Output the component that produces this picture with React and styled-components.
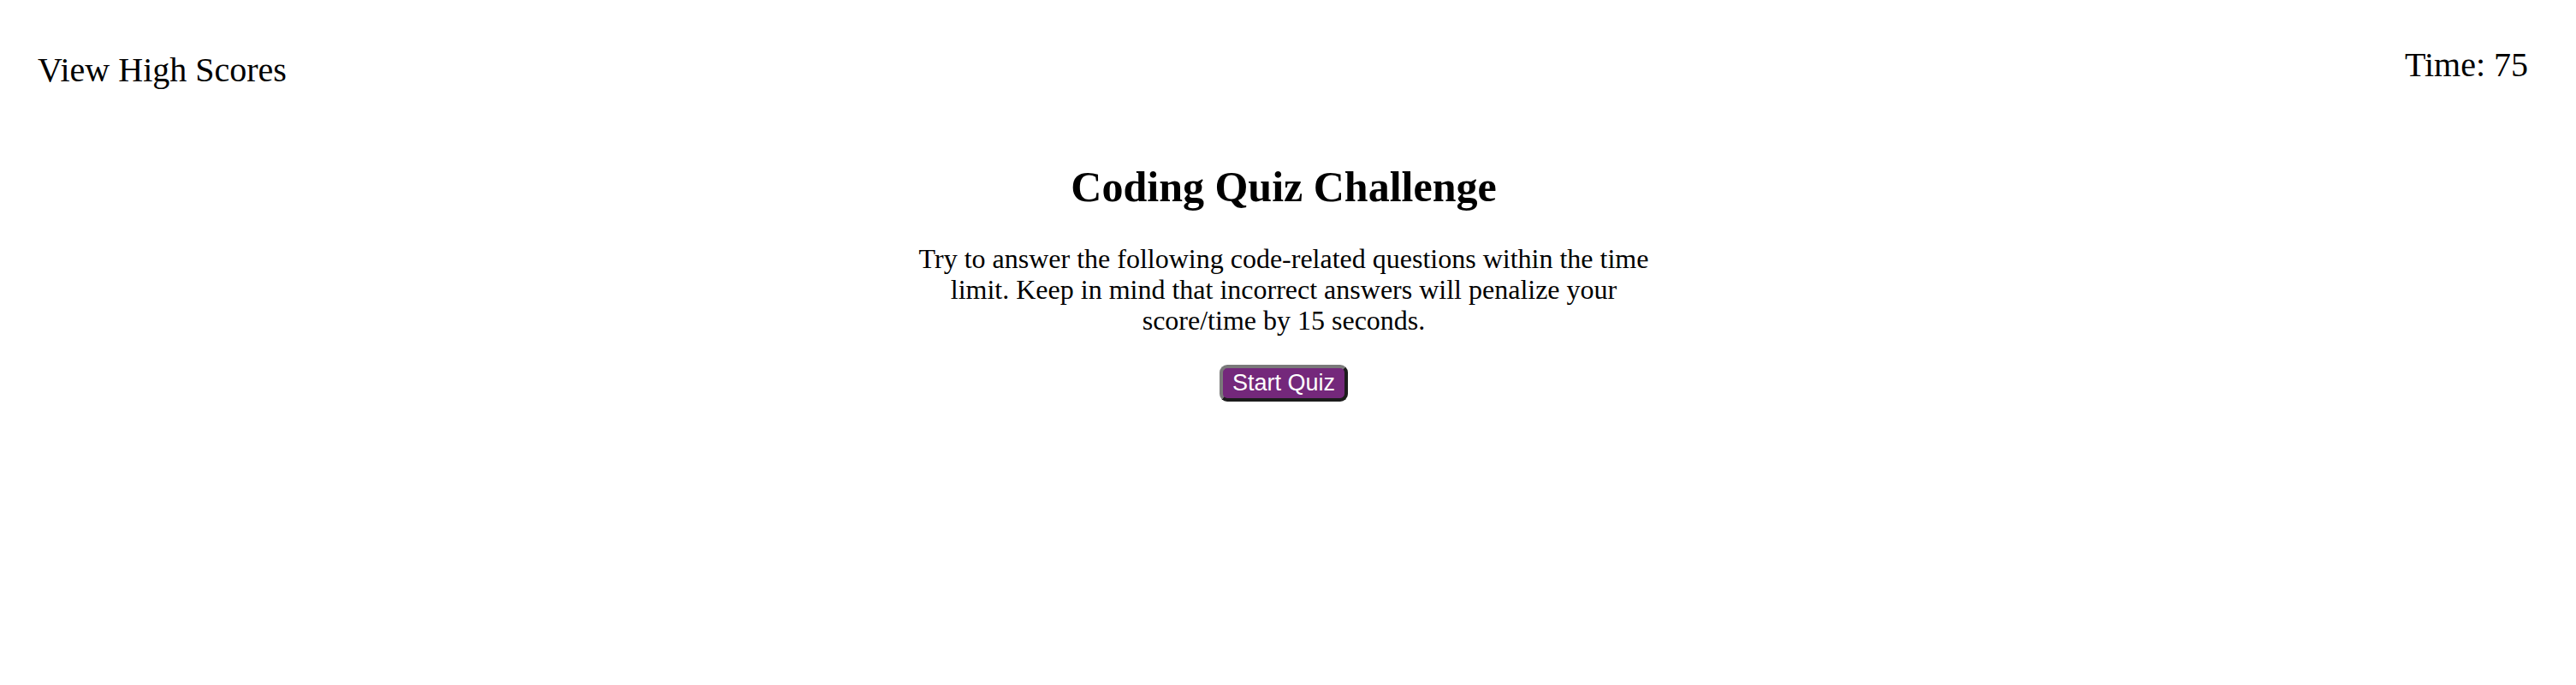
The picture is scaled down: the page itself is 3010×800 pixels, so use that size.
import React from 'react';
import styled, { createGlobalStyle } from 'styled-components';

const GlobalStyle = createGlobalStyle`
  html, body {
    margin: 0;
    padding: 0;
    background: #ffffff;
  }
  body {
    font-family: "Liberation Serif", "Times New Roman", serif;
    color: #000000;
  }
`;

const Header = styled.header`
  display: flex;
  justify-content: space-between;
  align-items: flex-start;
  padding: 56px 56px 0 44px;
`;

const HighScoresLink = styled.a`
  margin-top: 6px;
  font-size: 40px;
  line-height: 40px;
  color: #000000;
  text-decoration: none;
  cursor: pointer;
`;

const Timer = styled.div`
  font-size: 40px;
  line-height: 40px;
`;

const Main = styled.main`
  display: flex;
  flex-direction: column;
  align-items: center;
  padding: 91px 10px 0 0;
  text-align: center;
`;

const Title = styled.h1`
  margin: 0;
  font-size: 50px;
  line-height: 50px;
  font-weight: bold;
`;

const Intro = styled.p`
  width: 880px;
  margin: 41px 0 0;
  font-size: 32px;
  line-height: 36px;
`;

const StartButton = styled.button`
  margin-top: 34px;
  width: 150px;
  height: 43px;
  padding: 0;
  box-sizing: border-box;
  border: 4px solid;
  border-color: #7a7a7a #1c1c1c #1c1c1c #7a7a7a;
  border-radius: 9px;
  background: #74287b;
  color: #ffffff;
  font-family: "Liberation Sans", Arial, sans-serif;
  font-size: 27px;
  line-height: 35px;
  cursor: pointer;
`;

const App = () => {
  return (
    <>
      <GlobalStyle />
      <Header>
        <HighScoresLink>View High Scores</HighScoresLink>
        <Timer>Time: 75</Timer>
      </Header>
      <Main>
        <Title>Coding Quiz Challenge</Title>
        <Intro>
          Try to answer the following code-related questions within the time
          limit. Keep in mind that incorrect answers will penalize your
          score/time by 15 seconds.
        </Intro>
        <StartButton>Start Quiz</StartButton>
      </Main>
    </>
  );
};

export default App;
